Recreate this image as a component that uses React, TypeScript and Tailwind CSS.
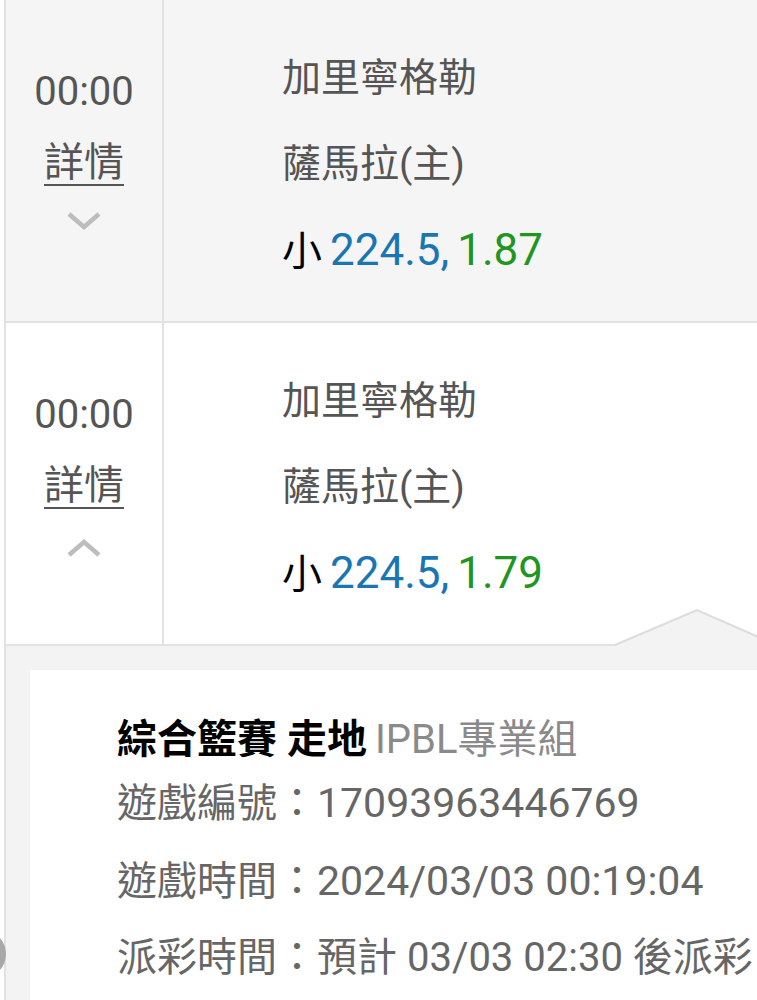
import React from 'react';

interface MatchRowProps {
  time: string;
  home: string;
  away: string;
  line: string;
  odds: string;
  open?: boolean;
  shaded?: boolean;
}

function Chevron({ up = false }: { up?: boolean }) {
  return (
    <svg width="36" height="20" viewBox="0 0 36 20" className="block">
      <path
        d={up ? 'M3 17 L18 4 L33 17' : 'M3 3 L18 16 L33 3'}
        fill="none"
        stroke="#bdbdbd"
        strokeWidth="4.5"
      />
    </svg>
  );
}

function MatchRow({ time, home, away, line, odds, open = false, shaded = false }: MatchRowProps) {
  return (
    <div className={`flex h-[323px] border-b-2 border-[#e2e2e2] ${shaded ? 'bg-[#f5f5f5]' : 'bg-white'}`}>
      <div className="w-[158px] shrink-0 border-r-2 border-[#e2e2e2] flex flex-col items-center pt-[56px] text-[#555]">
        <div className="leading-[72px]">{time}</div>
        <div className="leading-[70px] underline decoration-2 underline-offset-[8px]">詳情</div>
        <div className={open ? 'mt-[17px]' : 'mt-[13px]'}>
          <Chevron up={open} />
        </div>
      </div>
      <div className="flex-1 pl-[118px] pt-[35px] text-[#555]">
        <div className="leading-[86px] text-[39px]">{home}</div>
        <div className="leading-[86px] text-[39px]">{away}</div>
        <div className="leading-[86px] whitespace-nowrap">
          <span className="text-black">小</span>
          <span className="ml-[8px] text-[44px] text-[#1a76b3]">{line},</span>
          <span className="ml-[8px] text-[44px] text-[#1f961f]">{odds}</span>
        </div>
      </div>
    </div>
  );
}

export default function App() {
  return (
    <div
      className="relative w-[757px] h-[1000px] overflow-hidden bg-white text-[40px]"
      style={{ fontFamily: "Roboto, 'Noto Sans CJK TC', sans-serif" }}
    >
      <div className="ml-[4px] border-l-2 border-[#e2e2e2] h-full">
        <MatchRow time="00:00" home="加里寧格勒" away="薩馬拉(主)" line="224.5" odds="1.87" shaded />
        <div className="relative">
          <MatchRow time="00:00" home="加里寧格勒" away="薩馬拉(主)" line="224.5" odds="1.79" open />
          <svg className="absolute left-0 bottom-[-2px]" width="757" height="40" viewBox="0 0 757 40">
            <polygon points="609,38 691,2 757,30 757,40 609,40" fill="#f3f3f3" />
            <polyline points="609,37 691,2 757,31" fill="none" stroke="#dcdcdc" strokeWidth="2" />
          </svg>
        </div>
        <div className="bg-[#f3f3f3] pt-[24px] pl-[24px] h-full">
          <div className="bg-white pl-[87px] pt-[38px] h-full">
            <div className="leading-[64px] text-black whitespace-nowrap">
              <span className="font-bold">綜合籃賽 走地</span>
              <span className="ml-[8px] text-[#8a8a8a]">IPBL專業組</span>
            </div>
            <div className="leading-[62px] text-[#666] whitespace-nowrap">
              遊戲編號：<span className="text-[41px]">17093963446769</span>
            </div>
            <div className="mt-[8px] leading-[76px] text-[#666] whitespace-nowrap">
              遊戲時間：<span className="text-[41px]">2024/03/03 00:19:04</span>
            </div>
            <div className="leading-[76px] text-[#666] whitespace-nowrap">派彩時間：預計 03/03 02:30 後派彩</div>
          </div>
        </div>
      </div>
      <div className="absolute left-[-44px] top-[930px] w-[50px] h-[48px] rounded-full bg-[#a8a8a8]" />
    </div>
  );
}
